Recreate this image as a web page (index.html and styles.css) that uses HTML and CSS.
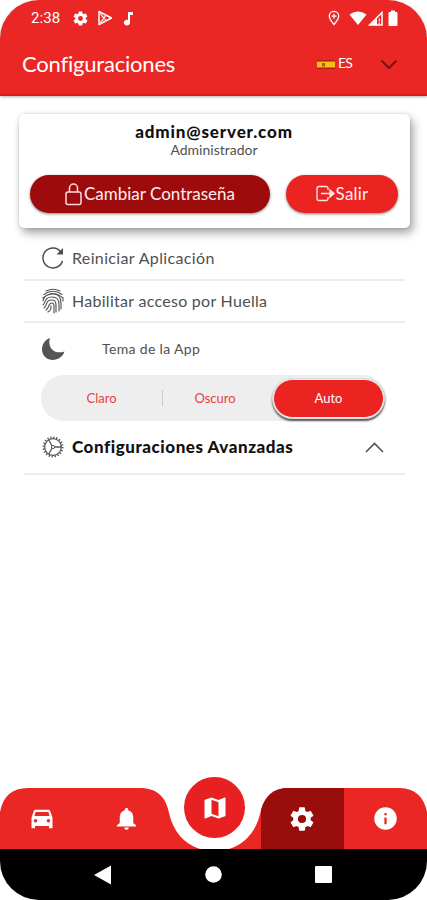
FILE: index.html
```html
<!DOCTYPE html>
<html lang="es">
<head>
    <meta charset="UTF-8">
    <meta name="viewport" content="width=device-width, initial-scale=1.0">
    <title>Configuraciones</title>
    <link rel="stylesheet" href="styles.css">
</head>
<body>
<div class="phone">
    <header class="header">
        <div class="status-bar">
            <span class="time">2:38</span>
            <svg class="st-gear" width="17" height="17" viewBox="0 0 24 24"><use href="#gear"/></svg>
            <svg class="st-play" width="16" height="16" viewBox="0 0 16 16" fill="none" stroke="#fff" stroke-width="1.5" stroke-linejoin="round"><path d="M2 1.500L14.500 8 2 14.500z"/><path d="M2 2l5 6-5 6M4.500 5.500l4.500 5M5 11l4-6" stroke-width="1.100"/></svg>
            <svg class="st-note" width="11" height="15" viewBox="0 0 11 15" fill="#fff"><path d="M5 1h5v3H7v7.500A3.100 2.800 0 1 1 5 9z"/></svg>
            <svg class="st-pin" width="12" height="16" viewBox="0 0 12 16" fill="none" stroke="#fff" stroke-width="1.300"><path d="M6 14.500C3 11 1.300 8.500 1.300 6a4.700 4.700 0 0 1 9.400 0c0 2.500-1.700 5-4.700 8.500zM6 3.700v5M3.500 6.200h5"/></svg>
            <svg class="st-wifi" width="18" height="14" viewBox="0 0 18 14" fill="#fff"><path d="M.5 3.500Q9-2.500 17.500 3.500L9 14z"/></svg>
            <svg class="st-signal" width="15" height="15" viewBox="0 0 15 15"><path d="M14 1.500v12.500H1.500z" fill="none" stroke="#fff" stroke-width="1.500"/><path d="M2 14L9 7v7z" fill="#fff"/><path d="M11.300 7.500v3M11.300 11.500v1.500" stroke="#fff" stroke-width="1.200"/></svg>
            <svg class="st-battery" width="10" height="16" viewBox="0 0 10 16" fill="#fff"><path d="M3 .5h4v1.500h1.500Q9.500 2 9.500 3v12q0 1-1 1h-7q-1 0-1-1V3q0-1 1-1H3z"/></svg>
        </div>
        <div class="title-bar">
            <h1 class="title">Configuraciones</h1>
            <div class="language">
                <svg width="18" height="9" viewBox="0 0 18 9"><path d="M0 0h18v9H0z" fill="#b51b16"/><path d="M0 1.500h18v6H0z" fill="#f8bd16"/><path d="M5 3h3v3.500H5z" fill="#9b6423"/></svg>
                <span>ES</span>
            </div>
            <svg class="chevron" width="18" height="11" viewBox="0 0 18 11" fill="none" stroke="#7d1010" stroke-width="2"><path d="M1.500 1.500L9 9l7.500-7.500"/></svg>
        </div>
    </header>

    <main class="content">
        <section class="user-card">
            <h2 class="email">admin@server.com</h2>
            <p class="role">Administrador</p>
            <div class="actions">
                <button class="btn btn-password">
                    <svg width="17" height="23" viewBox="0 0 17 23" fill="none" stroke="#ffdcdc" stroke-width="1.500"><rect x="1" y="9" width="15" height="12.500" rx="2"/><path d="M4.500 9V5a4 4 0 0 1 8 0v4"/></svg>
                    <span>Cambiar Contraseña</span>
                </button>
                <button class="btn btn-exit">
                    <svg width="20" height="18" viewBox="0 0 20 18" fill="none" stroke="#ffe5e5" stroke-width="1.400"><path d="M12 5V3.500Q12 1.500 10 1.500H3Q1 1.500 1 3.500v10q0 2 2 2h7q2 0 2-2V12M5 8.500h13"/><path d="M14 5l4 3.500-4 3.500z" fill="#ffe5e5"/></svg>
                    <span>Salir</span>
                </button>
            </div>
        </section>

        <div class="settings">
            <div class="row row-restart">
                <svg width="24" height="24" viewBox="0 0 24 24" fill="none" stroke="#4d4d4d" stroke-width="1.500"><path d="M20 6A10 10 0 1 0 21.500 15"/><path d="M22 2v6.500h-6.500z" fill="#4d4d4d" stroke="none"/></svg>
                <span>Reiniciar Aplicación</span>
            </div>
            <div class="row row-finger">
                <svg width="24" height="26" viewBox="0 0 24 26" fill="none" stroke="#555" stroke-width="1.150" stroke-linecap="round"><path d="M5 3Q12-.5 19 3M3 6.500Q12 0 21 6.500M2 10Q12 1 22 10v3M2 13C3 6 9 6 12 6c6 0 8 4 8 9v6M2 17c3-2 1-8 9-8 5 0 7 3 7 7v7M3 20c4-3 1-8 8-8 3 0 4 2 4 5v7M5 22c4-3 2-7 6-7 2 0 2 2 2 3v7M7 24c3-2 3-3 3-6"/></svg>
                <span>Habilitar acceso por Huella</span>
            </div>
            <div class="theme">
                <div class="theme-head">
                    <svg width="24" height="24" viewBox="0 0 24 24" fill="#555"><path d="M9 1C6 10 13 18 23.500 14.500 20 26 1.500 26 1 12.500 1 7 4 3 9 1z"/></svg>
                    <span>Tema de la App</span>
                </div>
                <div class="segment">
                    <span class="option option-light">Claro</span>
                    <span class="option option-dark">Oscuro</span>
                    <span class="option selected">Auto</span>
                </div>
            </div>
            <div class="row row-advanced">
                <svg width="24" height="24" viewBox="0 0 24 24" fill="none" stroke="#555"><circle cx="12" cy="12" r="9.500" stroke-width="2" stroke-dasharray="1.300 1.684"/><circle cx="12" cy="12" r="8.300" stroke-width="1.200"/><circle cx="12" cy="12" r="1.600"/><path d="M13.500 12h7M11 10.700L7.800 5M11 13.300L7.800 19" stroke-width="1.300"/></svg>
                <span>Configuraciones Avanzadas</span>
                <svg class="arrow" width="19" height="11" viewBox="0 0 19 11" fill="none" stroke="#555" stroke-width="1.600"><path d="M1 10l8.500-8.500L18 10"/></svg>
            </div>
        </div>
    </main>

    <nav class="bottom-nav">
        <svg class="nav-shape" width="427" height="61" viewBox="0 0 427 61">
            <path fill="#eb2726" d="M0 24C3 8 12 0 28 0H140C157 0 166 9 169 25C173 43 184 56 200 61H0z"/>
            <path fill="#eb2726" d="M229 61C245 56 257 43 261 22C265 8 273 0 289 0H400C415 0 424 9 427 24V61z"/>
            <path fill="#9a0d0d" d="M261 61V22C265 8 273 0 289 0H344V61z"/>
        </svg>
        <a class="tab"><svg width="28" height="28" viewBox="0 0 24 24"><path d="M18.920 5.010C18.720 4.420 18.160 4 17.500 4h-11c-.66 0-1.210.42-1.420 1.010L3 11v9h3v-2h12v2h3v-9zM6.500 15a1.500 1.500 0 1 1 0-3 1.500 1.500 0 0 1 0 3zm11 0a1.500 1.500 0 1 1 0-3 1.500 1.500 0 0 1 0 3zM5.500 9.500l1-3.500h11l1 3.500z"/></svg></a>
        <a class="tab"><svg width="27" height="27" viewBox="0 0 24 24"><path d="M12 22a2 2 0 0 0 2-2h-4a2 2 0 0 0 2 2zm6-6v-5c0-3.070-1.640-5.640-4.500-6.320V4a1.500 1.500 0 0 0-3 0v.68C7.630 5.360 6 7.920 6 11v5l-2.500 2v1h17v-1z"/></svg></a>
        <a class="tab-map"><svg width="28" height="28" viewBox="0 0 24 24"><path d="M20.500 3l-.16.030L15 5.100 9 3 3.360 4.900a.5.5 0 0 0-.36.480V20.500c0 .3.300.5.660.470L9 18.900l6 2.100 5.640-1.900a.5.500 0 0 0 .36-.480V3.500a.5.500 0 0 0-.5-.5zM15 19l-6-2.110V5l6 2.110z"/></svg></a>
        <a class="tab"><svg width="28" height="28" viewBox="0 0 24 24"><path id="gear" d="M19.430 12.980a7.800 7.800 0 0 0 0-1.960l2.110-1.650a.5.5 0 0 0 .12-.64l-2-3.460a.5.5 0 0 0-.61-.22l-2.490 1a7.300 7.300 0 0 0-1.690-.98l-.38-2.650A.49.490 0 0 0 14 2h-4a.49.490 0 0 0-.49.420l-.38 2.650c-.61.25-1.170.59-1.690.98l-2.490-1a.49.490 0 0 0-.61.220l-2 3.460a.49.490 0 0 0 .12.640l2.110 1.650a7.900 7.900 0 0 0 0 1.960l-2.110 1.650a.5.500 0 0 0-.12.640l2 3.460c.12.220.39.300.61.220l2.490-1c.52.400 1.080.730 1.690.980l.38 2.650c.03.240.24.420.49.420h4c.25 0 .46-.18.490-.42l.38-2.650a7.300 7.300 0 0 0 1.690-.98l2.490 1c.22.080.49 0 .61-.22l2-3.460a.5.500 0 0 0-.12-.64zM12 15.500a3.500 3.500 0 1 1 0-7 3.500 3.500 0 0 1 0 7z"/></svg></a>
        <a class="tab"><svg width="27" height="27" viewBox="0 0 24 24"><path d="M12 2a10 10 0 1 0 0 20 10 10 0 0 0 0-20zm1 15h-2v-6h2zm0-8h-2V7h2z"/></svg></a>
    </nav>

    <footer class="system-bar">
        <svg width="17" height="20" viewBox="0 0 17 20"><path d="M17 .5v19L0 10z"/></svg>
        <svg width="17" height="17" viewBox="0 0 17 17"><circle cx="8.500" cy="8.500" r="8.300"/></svg>
        <svg width="17" height="17" viewBox="0 0 17 17"><rect width="17" height="17" rx="1"/></svg>
    </footer>
</div>
</body>
</html>
```
FILE: styles.css
```css
* {
    margin: 0;
    padding: 0;
    box-sizing: border-box;
}

body {
    background: #fff;
    font-family: Lato, "Open Sans", sans-serif;
    color: #505050;
}

svg {
    display: block;
    flex-shrink: 0;
}

.phone {
    width: 427px;
    height: 900px;
    display: flex;
    flex-direction: column;
    overflow: hidden;
}

/* header */
.header {
    height: 96px;
    background: #eb2726;
    border-bottom: 2px solid #df1716;
    border-radius: 39px 39px 0 0;
    box-shadow: 0 1px 3px rgba(0, 0, 0, 0.3);
    color: #fff;
}

.status-bar {
    display: flex;
    align-items: center;
    height: 36px;
    padding: 0 29px 0 31px;
}

.time {
    width: 41px;
    font: 15px Roboto, sans-serif;
    letter-spacing: 0.1px;
}

.st-gear {
    fill: #fff;
}

.st-play {
    margin-left: 8px;
}

.st-note {
    margin-left: 10px;
}

.st-pin {
    margin-left: auto;
}

.st-wifi {
    margin-left: 9px;
}

.st-signal {
    margin-left: 1px;
}

.st-battery {
    margin-left: 5px;
}

.title-bar {
    display: flex;
    align-items: center;
    height: 56px;
    padding: 0 29px 0 22px;
}

.title {
    font-size: 22px;
    font-weight: 400;
    line-height: 28px;
    letter-spacing: -0.2px;
}

.language {
    display: flex;
    align-items: center;
    gap: 3px;
    margin-left: auto;
    font-size: 14px;
    line-height: 18px;
    letter-spacing: -0.8px;
}

.language span {
    position: relative;
    top: -1px;
}

.chevron {
    margin-left: 28px;
}

/* user card */
.content {
    flex: 1;
    padding: 18px 17px 0 19px;
}

.user-card {
    height: 114px;
    padding: 8px 12px 0 11px;
    border-radius: 5px;
    background: #fff;
    box-shadow: 3px 5px 10px rgba(0, 0, 0, 0.36), 0 0 3px rgba(0, 0, 0, 0.16);
    text-align: center;
}

.email {
    color: #111;
    font-size: 17px;
    font-weight: 900;
    line-height: 20px;
    letter-spacing: 0.85px;
}

.role {
    font-size: 14px;
    line-height: 16px;
}

.actions {
    display: flex;
    gap: 16px;
    margin-top: 17px;
}

.btn {
    display: flex;
    align-items: center;
    justify-content: center;
    height: 38px;
    border: none;
    border-radius: 19px;
    box-shadow: 0 1px 3px rgba(0, 0, 0, 0.5);
    color: #ffeded;
    font-family: inherit;
    font-size: 17px;
}

.btn span {
    padding-bottom: 2px;
}

.btn-password {
    width: 240px;
    gap: 2px;
    background: #9d0b0c;
}

.btn-exit {
    width: 112px;
    background: #eb2421;
    letter-spacing: 0.2px;
}

/* settings list */
.settings {
    margin: 9px 5px 0;
}

.row {
    display: flex;
    align-items: center;
    gap: 7px;
    padding-left: 17px;
    border-bottom: 2px solid #ececec;
    font-size: 16px;
}

.row span {
    padding-bottom: 2px;
}

.row-restart {
    height: 44px;
    letter-spacing: 0.36px;
}

.row-finger {
    height: 42px;
    letter-spacing: 0.28px;
}

.theme {
    padding: 13px 19px 0 17px;
}

.theme-head {
    display: flex;
    align-items: center;
    gap: 37px;
    height: 26px;
    font-size: 14px;
    letter-spacing: 0.35px;
}

.theme-head span {
    padding-bottom: 2px;
}

.segment {
    display: flex;
    align-items: center;
    height: 46px;
    margin-top: 13px;
    border-radius: 23px;
    background: #eee;
}

.option {
    display: flex;
    align-items: center;
    justify-content: center;
    color: #e94242;
    font-size: 13px;
}

.option-light {
    width: 122px;
    height: 16px;
    border-right: 1px solid #ccc;
}

.option-dark {
    width: 110px;
    padding-right: 6px;
}

.selected {
    width: 111px;
    height: 39px;
    border: 1px solid #eee;
    border-radius: 20px;
    background: #eb2421;
    box-shadow: 0 0 0 1px #ddd, 0 2px 2px 1px #555;
    color: #fff;
}

.row-advanced {
    height: 54px;
    padding-right: 21px;
    color: #111;
    font-size: 17px;
    font-weight: 900;
    letter-spacing: 0.55px;
}

.arrow {
    margin-left: auto;
}

/* bottom navigation */
.bottom-nav {
    position: relative;
    display: grid;
    grid-template-columns: 84px 84px 92px 84px 83px;
    height: 61px;
    fill: #fff;
}

.nav-shape {
    position: absolute;
    top: 0;
    left: 0;
}

.tab {
    position: relative;
    display: flex;
    align-items: center;
    justify-content: center;
}

.tab-map {
    position: relative;
    display: flex;
    align-items: center;
    justify-content: center;
    width: 61px;
    height: 61px;
    margin: -11px 0 0 16px;
    border-radius: 50%;
    background: #e92021;
}

.system-bar {
    display: flex;
    align-items: center;
    justify-content: space-between;
    height: 51px;
    padding: 0 95px 0 94px;
    border-radius: 0 0 39px 39px;
    background: #000;
    fill: #fff;
}
```
